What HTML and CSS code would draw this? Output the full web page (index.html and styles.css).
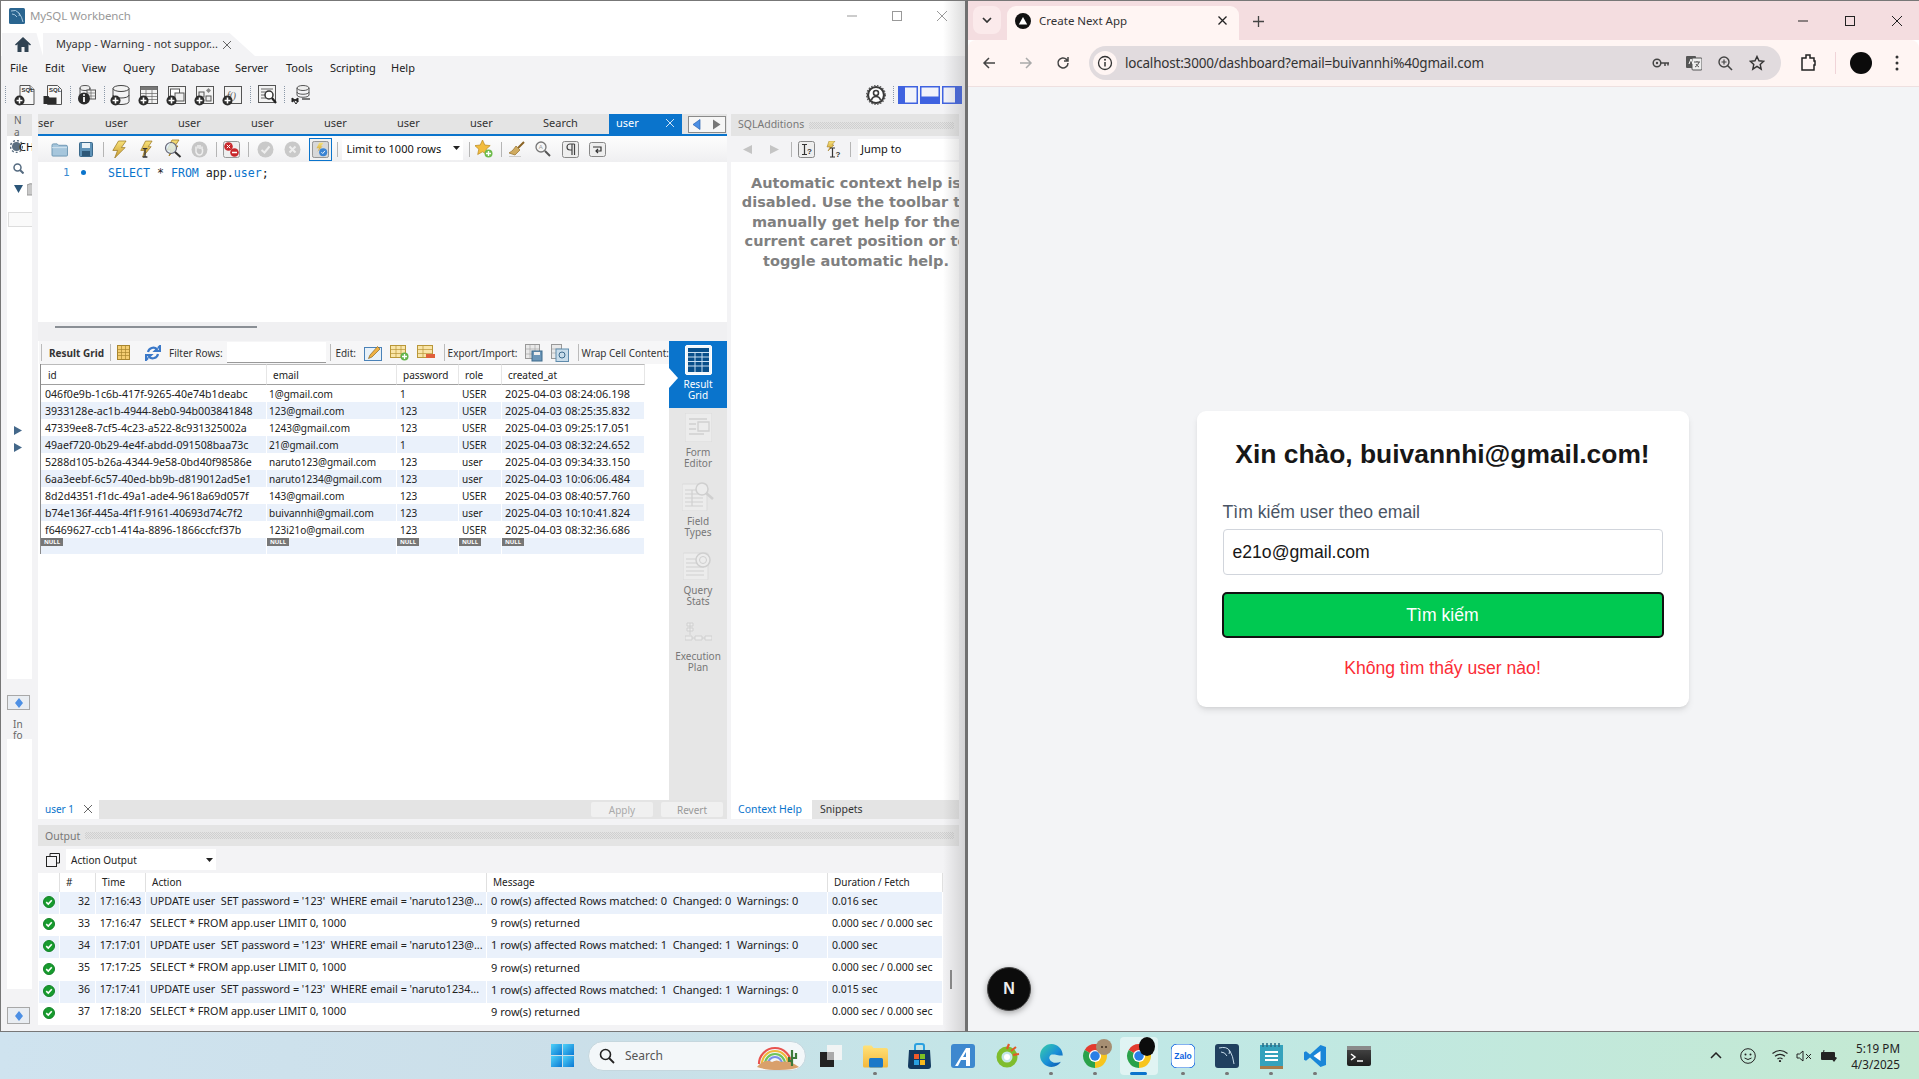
FILE: index.html
```html
<!DOCTYPE html>
<html lang="en">
<head>
<meta charset="utf-8">
<title>Desktop</title>
<link rel="stylesheet" href="styles.css">
</head>
<body>
<svg class="defs" width="0" height="0" aria-hidden="true">
  <defs>
    <linearGradient id="gBolt" x1="0" y1="0" x2="0" y2="1"><stop offset="0" stop-color="#f8e27a"/><stop offset="1" stop-color="#c99a2e"/></linearGradient>
    <linearGradient id="gEdge" x1="0" y1="0" x2="1" y2="1"><stop offset="0" stop-color="#38d0a8"/><stop offset=".55" stop-color="#1a8fd8"/><stop offset="1" stop-color="#0a4ea8"/></linearGradient>
    <linearGradient id="gWin" x1="0" y1="0" x2="1" y2="1"><stop offset="0" stop-color="#4fd2f8"/><stop offset="1" stop-color="#0a78d4"/></linearGradient>
    <linearGradient id="gFolder" x1="0" y1="0" x2="0" y2="1"><stop offset="0" stop-color="#ffe27a"/><stop offset="1" stop-color="#f4b83a"/></linearGradient>
    <linearGradient id="gTerm" x1="0" y1="0" x2="0" y2="1"><stop offset="0" stop-color="#4a4a4a"/><stop offset="1" stop-color="#1c1c1c"/></linearGradient>

    <symbol id="plusb" viewBox="0 0 12 12"><circle cx="6" cy="6" r="5.5" fill="#2b2b2b"/><path d="M6 2.8v6.4M2.8 6h6.4" stroke="#fff" stroke-width="1.7"/></symbol>
    <symbol id="page" viewBox="0 0 20 20"><path d="M5 .5h10l4 4v15H5z" fill="#f7f7f7" stroke="#555"/><path d="M15 .5v4h4" fill="#ddd" stroke="#555"/><text x="6.5" y="7.4" font-size="6" font-weight="700" font-family="Liberation Sans" fill="#333">SQL</text></symbol>
    <symbol id="folder" viewBox="0 0 18 16"><path d="M1 3.5q0-1.500 1.500-1.500h4l1.500 1.500h8q1.500 0 1.500 1.500v9q0 1-1 1h-14.500q-1 0-1-1z" fill="#a6c6dc" stroke="#6c95b2"/><path d="M1 6h16" stroke="#d4e4ef"/></symbol>
    <symbol id="save" viewBox="0 0 14 15"><rect x=".5" y=".5" width="13" height="14" rx="1" fill="#5f93b8" stroke="#3c6a8c"/><rect x="3" y="1" width="8" height="5" fill="#eaf2f7"/><rect x="3" y="9" width="8" height="5" fill="#2e5878"/></symbol>
    <symbol id="bolt" viewBox="0 0 18 20"><path d="M9 1h8l-5 7h4L5 19l3-8H3z" fill="url(#gBolt)" stroke="#9c7a25" stroke-width=".8"/></symbol>
    <symbol id="boltI" viewBox="0 0 16 20"><path d="M8 1h7l-4 6h3L5 18l2-7H3z" fill="url(#gBolt)" stroke="#9c7a25" stroke-width=".8"/><path d="M5 9h5M7.500 9v9M5 18h5" stroke="#333" stroke-width="1.400" fill="none"/></symbol>
    <symbol id="boltFind" viewBox="0 0 19 20"><path d="M9 1h7l-4 6h3L6 17l2-6H4z" fill="url(#gBolt)" stroke="#9c7a25" stroke-width=".8"/><circle cx="8" cy="9" r="5.500" fill="#dff0f8" fill-opacity=".8" stroke="#667" stroke-width="1.200"/><path d="M12 13l5.500 5" stroke="#333" stroke-width="2"/></symbol>
    <symbol id="hand" viewBox="0 0 17 17"><circle cx="8.500" cy="8.500" r="8" fill="#c6c6c6"/><path d="M5 8V5.500m2 2V4m2 4V4m2 4.500V5.500M5 8v3q1 3 3.500 3t3-3V8" stroke="#eee" stroke-width="1.500" fill="none"/></symbol>
    <symbol id="stopRed" viewBox="0 0 17 17"><rect x=".5" y=".5" width="16" height="16" rx="2" fill="#efefef" stroke="#999"/><circle cx="5.500" cy="5.500" r="4.300" fill="#c9272b"/><path d="M3.800 3.800l3.400 3.400m0-3.400l-3.400 3.400" stroke="#fff"/><circle cx="11.500" cy="11.500" r="4.300" fill="#c9272b"/><path d="M9 11.500h5" stroke="#fff" stroke-width="1.500"/></symbol>
    <symbol id="okC" viewBox="0 0 17 17"><circle cx="8.500" cy="8.500" r="8" fill="#c9c9c9"/><path d="M4.500 9l3 2.500 5-6" stroke="#eee" stroke-width="2" fill="none"/></symbol>
    <symbol id="noC" viewBox="0 0 17 17"><circle cx="8.500" cy="8.500" r="8" fill="#c9c9c9"/><path d="M5.500 5.500l6 6m0-6l-6 6" stroke="#eee" stroke-width="2" fill="none"/></symbol>
    <symbol id="toggle" viewBox="0 0 19 19"><rect x=".5" y=".5" width="18" height="18" rx="2" fill="#d8d8d8" stroke="#888"/><path d="M8 2h5l-3 4h2l-6 6 2-4H5z" fill="url(#gBolt)"/><circle cx="12.500" cy="12.500" r="4.500" fill="#3a84d4"/><path d="M10.500 12.500l1.500 1.500 2.500-3" stroke="#fff" fill="none"/></symbol>
    <symbol id="star" viewBox="0 0 18 18"><path d="M7.500 0l2.300 5 5.400.6-4 3.600 1.100 5.300-4.800-2.700-4.800 2.700 1.100-5.300-4-3.600 5.400-.6z" fill="#f2bc3e" stroke="#b98820" stroke-width=".7"/><circle cx="13.500" cy="13.500" r="4" fill="#6dbb4b"/><path d="M13.500 11v5M11 13.500h5" stroke="#fff" stroke-width="1.400"/></symbol>
    <symbol id="broom" viewBox="0 0 17 17"><path d="M16 1l-6 6" stroke="#8a6324" stroke-width="2"/><path d="M8 5l4 4-5 5-6-2q3-2 4-3z" fill="#d0ab60" stroke="#93702c" stroke-width=".7"/><path d="M1 15.500h12" stroke="#ccc"/></symbol>
    <symbol id="find" viewBox="0 0 16 16"><circle cx="6" cy="6" r="5" fill="#f6f6f6" stroke="#777" stroke-width="1.300"/><text x="3.800" y="8" font-size="6" fill="#999" font-family="Liberation Sans">A</text><path d="M10 10l5 5" stroke="#555" stroke-width="2"/></symbol>
    <symbol id="para" viewBox="0 0 17 17"><rect x=".5" y=".5" width="16" height="16" rx="2" fill="#eee" stroke="#888"/><path d="M10 3v11M12.500 3v11M12.500 3H8a3 3 0 0 0 0 6h2" stroke="#444" stroke-width="1.200" fill="none"/></symbol>
    <symbol id="wrap" viewBox="0 0 17 15"><rect x=".5" y=".5" width="16" height="14" rx="2" fill="#eee" stroke="#888"/><path d="M4 5h8v4H7m2-2l-2 2 2 2" stroke="#333" stroke-width="1.200" fill="none"/></symbol>
    <symbol id="arrL" viewBox="0 0 9 9"><path d="M9 0v9L0 4.500z" fill="#c4c4c4"/></symbol>
    <symbol id="arrR" viewBox="0 0 9 9"><path d="M0 0v9l9-4.500z" fill="#c4c4c4"/></symbol>
    <symbol id="navBoth" viewBox="0 0 38 17"><rect x=".5" y=".5" width="37" height="16" fill="#f6f6f6" stroke="#8a8a8a"/><path d="M12 3.500v10L5 8.500z" fill="#4c8fe4" stroke="#2a62b0" stroke-width=".7"/><path d="M25 3.500v10l7.500-5z" fill="#777"/></symbol>
    <symbol id="sideBtn" viewBox="0 0 8 10"><path d="M4 0v10L0 5zM4 0v10l4-5z" fill="#4c8fe4"/></symbol>
    <symbol id="helpI" viewBox="0 0 17 17"><rect x=".5" y=".5" width="16" height="16" rx="2" fill="#eee" stroke="#888"/><path d="M4 3.500h5M6.500 3.500v10M4 13.500h5" stroke="#333" stroke-width="1.200" fill="none"/><text x="9" y="13" font-size="8" font-weight="700" font-family="Liberation Sans" fill="#333">?</text></symbol>
    <symbol id="helpB" viewBox="0 0 17 17"><path d="M4 0h6L7 4h2L3 10l2-4H2z" fill="url(#gBolt)" stroke="#9c7a25" stroke-width=".5"/><path d="M5 7h5M7.500 7v9M5 16h5" stroke="#333" stroke-width="1.200" fill="none"/><text x="10.500" y="16" font-size="8" font-weight="700" font-family="Liberation Sans" fill="#333">?</text></symbol>

    <symbol id="db" viewBox="0 0 18 20"><ellipse cx="9" cy="3.500" rx="8" ry="3" fill="#f2f2f2" stroke="#444"/><path d="M1 3.500v13c0 4 16 4 16 0v-13M1 10c0 4 16 4 16 0" fill="none" stroke="#444"/></symbol>
    <symbol id="grid" viewBox="0 0 18 18"><rect x=".5" y=".5" width="17" height="17" fill="#f3f3f3" stroke="#555"/><rect x=".5" y=".5" width="17" height="3.500" fill="#777"/><path d="M1 7.500h16M1 10.500h16M1 13.500h16M6 4v14M12 4v14" stroke="#666" stroke-width=".7"/></symbol>
    <symbol id="winV" viewBox="0 0 18 18"><rect x=".5" y=".5" width="17" height="17" fill="#f3f3f3" stroke="#555"/><rect x="2.500" y="3" width="9" height="8" fill="#fff" stroke="#555"/><rect x="7" y="7" width="9" height="8" fill="#eee" stroke="#555"/></symbol>
    <symbol id="procB" viewBox="0 0 18 18"><rect x=".5" y=".5" width="17" height="17" fill="#f3f3f3" stroke="#555"/><rect x="3" y="6" width="5" height="5" fill="#eee" stroke="#555"/><rect x="10" y="10" width="5" height="5" fill="#eee" stroke="#555"/><path d="M12.500 2l2.500 2.500-2.500 2.500-2.500-2.500z" fill="#888"/></symbol>
    <symbol id="funcB" viewBox="0 0 18 18"><rect x=".5" y=".5" width="17" height="17" fill="#f3f3f3" stroke="#555"/><text x="3" y="13" font-size="9.500" fill="#555" font-family="Liberation Serif" font-style="italic">f()</text></symbol>
    <symbol id="searchT" viewBox="0 0 19 20"><rect x=".5" y=".5" width="17" height="17" fill="#f3f3f3" stroke="#555"/><path d="M3 4h12M3 7h6M3 10h5M3 13h5" stroke="#666"/><circle cx="11" cy="10" r="4" fill="#fff" stroke="#333" stroke-width="1.500"/><path d="M14 13l4 5" stroke="#222" stroke-width="2.200"/></symbol>
    <symbol id="infoDb" viewBox="0 0 18 20"><ellipse cx="7" cy="3" rx="5" ry="2.500" fill="#eee" stroke="#555"/><path d="M2 3v6M12 3v4" stroke="#555"/><rect x="9" y="5" width="8.500" height="9" fill="#f3f3f3" stroke="#555"/><path d="M9 8h9M9 11h9M13 5v9" stroke="#666" stroke-width=".7"/><circle cx="6" cy="13.500" r="6" fill="#2a2a2a"/><path d="M6 12v5" stroke="#fff" stroke-width="1.800"/><circle cx="6" cy="10" r="1" fill="#fff"/></symbol>
    <symbol id="openSql" viewBox="0 0 19 20"><path d="M4 .5h10l4 4v15H4z" fill="#f7f7f7" stroke="#555"/><text x="5.500" y="7.400" font-size="6" font-weight="700" font-family="Liberation Sans" fill="#333">SQL</text><path d="M0 11h5l1 1.500h7V19H0z" fill="#2b2b2b"/></symbol>
    <symbol id="recon" viewBox="0 0 20 20"><ellipse cx="12" cy="3" rx="6" ry="2.500" fill="#eee" stroke="#555"/><path d="M6 3v7c0 3 12 3 12 0V3M6 7c0 3 12 3 12 0" fill="none" stroke="#555"/><path d="M11 14h8" stroke="#333" stroke-width="1.300"/><path d="M1 13l3 2-3 2zM7 13l-3 2 3 2zM3 16l2 3M7 16l-2 3" fill="#222" stroke="#222"/></symbol>
    <symbol id="gearP" viewBox="0 0 20 20"><circle cx="10" cy="10" r="8" fill="#fff" stroke="#3b3b3b" stroke-width="2.200"/><circle cx="10" cy="10" r="9.400" fill="none" stroke="#555" stroke-width="1.200" stroke-dasharray="1.500 1.500"/><circle cx="10" cy="8" r="2.500" fill="none" stroke="#3b3b3b" stroke-width="1.600"/><path d="M5.500 15q1-3.500 4.500-3.500t4.500 3.500" fill="none" stroke="#3b3b3b" stroke-width="1.600"/></symbol>
    <symbol id="panelL" viewBox="0 0 20 18"><rect width="20" height="18" fill="#3f62e0"/><rect x="7" y="1.500" width="11.500" height="15" fill="#f2f3fa"/></symbol>
    <symbol id="panelB" viewBox="0 0 20 18"><rect width="20" height="18" fill="#3f62e0"/><rect x="1.500" y="1.500" width="17" height="9" fill="#f2f3fa"/></symbol>
    <symbol id="panelR" viewBox="0 0 20 18"><rect width="20" height="18" fill="#3f62e0"/><rect x="1.500" y="1.500" width="11.500" height="15" fill="#f2f3fa"/></symbol>

    <symbol id="stripGrid" viewBox="0 0 27 37"><rect x=".5" y=".5" width="26" height="29" rx="1.500" fill="#f2f7fb" stroke="#fff"/><rect x="3" y="3" width="21" height="24" fill="#084f8a"/><path d="M3 7.500h21M3 12h21M3 16.500h21M3 21h21M10 7.500V27M17 7.500V27" stroke="#c6dff2"/></symbol>
    <symbol id="stripForm" viewBox="0 0 27 29"><rect width="27" height="29" rx="1" fill="#ececec" stroke="#dadada"/><path d="M4 6h18M4 11h7M4 16h7M4 21h15M13 9h11v9H13z" stroke="#d0d0d0" fill="none" stroke-width="1.300"/></symbol>
    <symbol id="stripField" viewBox="0 0 32 29"><rect y="2" width="25" height="27" rx="1" fill="#ececec" stroke="#dadada"/><path d="M3 8h18M3 12h18M3 16h18M3 20h18M3 24h18M10 8v16" stroke="#d0d0d0" stroke-width="1.200"/><circle cx="20" cy="7" r="6" fill="#ececec" stroke="#cfcfcf" stroke-width="1.500"/><path d="M24 11l7 6" stroke="#cfcfcf" stroke-width="2.500"/></symbol>
    <symbol id="stripStats" viewBox="0 0 30 29"><rect y="2" width="25" height="27" rx="1" fill="#ececec" stroke="#dadada"/><path d="M3 8h14M3 12h14M3 16h18M3 20h18M3 24h18" stroke="#d0d0d0" stroke-width="1.200"/><circle cx="20" cy="9" r="7" fill="#ececec" stroke="#cfcfcf" stroke-width="1.500"/><circle cx="20" cy="9" r="3.500" fill="none" stroke="#cfcfcf"/></symbol>
    <symbol id="stripPlan" viewBox="0 0 27 22"><path d="M5 2v12M2 2h6v3H2zM2 7h6v3H2zM0 15h7v4H0zM10 15h7v4h-7zM20 15h7v4h-7zM7 17h3M17 17h3" fill="#ececec" stroke="#d0d0d0"/></symbol>

    <symbol id="rgIcon" viewBox="0 0 13 15"><rect x=".5" y=".5" width="12" height="14" fill="#f4ce72" stroke="#a9862e"/><path d="M4.500 1v13M8.500 1v13M1 4.500h11M1 7.500h11M1 10.500h11" stroke="#a9862e" stroke-width=".7"/></symbol>
    <symbol id="refresh" viewBox="0 0 16 16"><path d="M3 7a5.500 5.500 0 0 1 9-3l-2 2h5V1l-2 2" fill="none" stroke="#3a78c8" stroke-width="2.200"/><path d="M13 9a5.500 5.500 0 0 1-9 3l2-2H1v5l2-2" fill="none" stroke="#3a78c8" stroke-width="2.200"/></symbol>
    <symbol id="editI" viewBox="0 0 18 17"><rect x=".5" y="3.500" width="17" height="13" fill="#e8f1f8" stroke="#4a82b8"/><path d="M6 11l-1.500 3.500L8 13l8-8-2.500-2.500z" fill="#f0b040" stroke="#8a6a25" stroke-width=".7"/></symbol>
    <symbol id="addR" viewBox="0 0 19 16"><rect x=".5" y=".5" width="15" height="12" fill="#f9e5a8" stroke="#b99738"/><path d="M1 4.500h14M1 8.500h14M6 1v11M11 1v11" stroke="#b99738" stroke-width=".7"/><circle cx="14.500" cy="11.500" r="4" fill="#63b34a"/><path d="M14.500 9v5M12 11.500h5" stroke="#fff" stroke-width="1.300"/></symbol>
    <symbol id="delR" viewBox="0 0 19 16"><rect x=".5" y=".5" width="15" height="12" fill="#f9e5a8" stroke="#b99738"/><path d="M1 4.500h14M1 8.500h14M6 1v11" stroke="#b99738" stroke-width=".7"/><rect x="9" y="9" width="9" height="4" fill="#e0603a"/></symbol>
    <symbol id="expI" viewBox="0 0 18 18"><rect x=".5" y=".5" width="14" height="14" fill="#e9e9e9" stroke="#999"/><path d="M5 1v13M10 1v13M1 5h13M1 10h13" stroke="#aaa" stroke-width=".7"/><rect x="7" y="7" width="10" height="10" fill="#6c96b8" stroke="#3c6a8c"/><rect x="9" y="8" width="6" height="3" fill="#eee"/></symbol>
    <symbol id="impI" viewBox="0 0 18 18"><rect x=".5" y=".5" width="10" height="14" fill="#e9e9e9" stroke="#999"/><path d="M1 5h9M1 9h9" stroke="#aaa" stroke-width=".7"/><rect x="5" y="5" width="12.500" height="12.500" fill="#c8dcea" stroke="#5f8bac"/><circle cx="11" cy="11" r="3" fill="none" stroke="#3c6a8c"/></symbol>

    <symbol id="okG" viewBox="0 0 13 13"><circle cx="6.500" cy="6.500" r="6" fill="#179b2e" stroke="#0f7f24"/><path d="M3.500 6.700l2.200 2.100 3.800-4.300" stroke="#fff" stroke-width="1.700" fill="none"/></symbol>
    <symbol id="copyB" viewBox="0 0 14 14"><path d="M4 3V.5h9.500V10H11" fill="none" stroke="#222"/><rect x=".5" y="3.500" width="10" height="10" fill="none" stroke="#222"/></symbol>
    <symbol id="house" viewBox="0 0 16 15"><path d="M8 0L0 7.500l1 1 1.500-1.300V15h4V10h3v5h4V7.200L15 8.500l1-1z" fill="#2f4252"/></symbol>
    <symbol id="dolphin" viewBox="0 0 16 16"><rect width="16" height="16" rx="1.500" fill="#2a6590"/><path d="M2 3q5-2 8 2 3 4 4 9M3 6q3 0 5 3M10 5q1 1 0 3" fill="none" stroke="#b7d4e8" stroke-width=".9"/></symbol>

    <symbol id="chromeL" viewBox="0 0 24 24"><path d="M12 12L2.470 6.500A11 11 0 0 1 21.530 6.500z" fill="#e33b2e"/><path d="M12 12L21.530 6.500A11 11 0 0 1 12 23z" fill="#f7c51e"/><path d="M12 12L12 23A11 11 0 0 1 2.470 6.500z" fill="#2aa24a"/><circle cx="12" cy="12" r="5.600" fill="#fff"/><circle cx="12" cy="12" r="4.400" fill="#2a7fe6"/></symbol>
  </defs>
</svg>

<div class="desktop">
  <div class="windows">

    <section class="wb">
      <header class="wb-title">
        <svg width="16" height="16"><use href="#dolphin"/></svg>
        <span class="wb-name">MySQL Workbench</span>
        <div class="wb-ctl">
          <svg width="10" height="10" viewBox="0 0 10 10"><path d="M0 5h10" stroke="#999"/></svg>
          <svg width="10" height="10" viewBox="0 0 10 10"><rect x=".5" y=".5" width="9" height="9" fill="none" stroke="#999"/></svg>
          <svg width="10" height="10" viewBox="0 0 10 10"><path d="M0 0l10 10M10 0L0 10" stroke="#999"/></svg>
        </div>
      </header>
      <div class="wb-tabs">
        <div class="home-tab"><svg width="16" height="15"><use href="#house"/></svg></div>
        <div class="conn-tab"><span>Myapp - Warning - not suppor...</span><svg width="8" height="8" viewBox="0 0 8 8"><path d="M0 0l8 8M8 0L0 8" stroke="#666"/></svg></div>
      </div>
      <nav class="wb-menu">
        <span class="m-file">File</span><span class="m-edit">Edit</span><span class="m-view">View</span><span class="m-query">Query</span><span class="m-db">Database</span><span class="m-server">Server</span><span class="m-tools">Tools</span><span class="m-script">Scripting</span><span class="m-help">Help</span>
      </nav>
      <div class="wb-tools">
        <i class="dots"></i>
        <span class="tool first"><svg width="20" height="20"><use href="#page"/></svg><svg class="badge" width="11" height="11"><use href="#plusb"/></svg></span>
        <span class="tool"><svg width="20" height="20"><use href="#openSql"/></svg></span>
        <i class="dots"></i>
        <span class="tool"><svg width="18" height="20"><use href="#infoDb"/></svg></span>
        <i class="dots"></i>
        <span class="tool"><svg width="18" height="20"><use href="#db"/></svg><svg class="badge" width="11" height="11"><use href="#plusb"/></svg></span>
        <span class="tool"><svg width="18" height="18"><use href="#grid"/></svg><svg class="badge" width="11" height="11"><use href="#plusb"/></svg></span>
        <span class="tool"><svg width="18" height="18"><use href="#winV"/></svg><svg class="badge" width="11" height="11"><use href="#plusb"/></svg></span>
        <span class="tool"><svg width="18" height="18"><use href="#procB"/></svg><svg class="badge" width="11" height="11"><use href="#plusb"/></svg></span>
        <span class="tool"><svg width="18" height="18"><use href="#funcB"/></svg><svg class="badge" width="11" height="11"><use href="#plusb"/></svg></span>
        <i class="dots"></i>
        <span class="tool"><svg width="19" height="20"><use href="#searchT"/></svg></span>
        <i class="dots"></i>
        <span class="tool"><svg width="20" height="20"><use href="#recon"/></svg></span>
        <div class="wb-tools-right">
          <svg width="20" height="20"><use href="#gearP"/></svg>
          <i class="dots slim"></i>
          <svg width="20" height="18"><use href="#panelL"/></svg>
          <svg width="20" height="18"><use href="#panelB"/></svg>
          <svg width="20" height="18"><use href="#panelR"/></svg>
        </div>
      </div>

      <div class="wb-work">
        <aside class="nav-side">
          <div class="nav-head"><span>N<br>a</span></div>
          <div class="nav-body">
            <div class="nav-row"><svg width="13" height="13" viewBox="0 0 13 13"><circle cx="6.500" cy="6.500" r="4.500" fill="#5a6e80"/><circle cx="6.500" cy="6.500" r="6" fill="none" stroke="#5a6e80" stroke-width="1.500" stroke-dasharray="2 2"/></svg><b>CH</b></div>
            <div class="nav-find"><svg width="11" height="11" viewBox="0 0 11 11"><circle cx="4.500" cy="4.500" r="3.500" fill="none" stroke="#556b80" stroke-width="1.500"/><path d="M7 7l3.500 3.500" stroke="#556b80" stroke-width="2"/></svg></div>
            <div class="nav-tree"><svg width="9" height="8" viewBox="0 0 9 8"><path d="M0 0h9L4.500 8z" fill="#2b5578"/></svg><svg width="6" height="13" viewBox="0 0 6 13"><path d="M0 2q3-2 6-1v11H0z" fill="#c8c8c8" stroke="#999"/></svg></div>
            <div class="nav-filter"></div>
            <div class="nav-arrows">
              <svg width="8" height="9" viewBox="0 0 8 9"><path d="M0 0l8 4.500L0 9z" fill="#44688a"/></svg>
              <svg width="8" height="9" viewBox="0 0 8 9"><path d="M0 0l8 4.500L0 9z" fill="#44688a"/></svg>
            </div>
          </div>
          <div class="side-btn"><svg width="8" height="10"><use href="#sideBtn"/></svg></div>
          <div class="nav-info">In<br>fo</div>
          <div class="nav-body info"></div>
          <div class="side-btn low"><svg width="8" height="10"><use href="#sideBtn"/></svg></div>
        </aside>

        <div class="wb-center">
          <div class="wb-upper">
            <div class="q-col">
              <div class="q-tabs">
                <span class="qt cut">ser</span><span class="qt">user</span><span class="qt">user</span><span class="qt">user</span><span class="qt">user</span><span class="qt">user</span><span class="qt">user</span><span class="qt srch">Search</span>
                <span class="qt active">user<svg width="8" height="8" viewBox="0 0 8 8"><path d="M0 0l8 8M8 0L0 8" stroke="#cfe3f6"/></svg></span>
                <svg class="q-nav" width="38" height="17"><use href="#navBoth"/></svg>
              </div>
              <div class="q-bar">
                <span class="ti"><svg width="17" height="15"><use href="#folder"/></svg></span>
                <span class="ti"><svg width="14" height="15"><use href="#save"/></svg></span>
                <i class="sep"></i>
                <span class="ti"><svg width="17" height="19"><use href="#bolt"/></svg></span>
                <span class="ti"><svg width="15" height="19"><use href="#boltI"/></svg></span>
                <span class="ti"><svg width="19" height="20"><use href="#boltFind"/></svg></span>
                <span class="ti"><svg width="17" height="17"><use href="#hand"/></svg></span>
                <i class="sep"></i>
                <span class="ti"><svg width="17" height="17"><use href="#stopRed"/></svg></span>
                <i class="sep wide"></i>
                <span class="ti"><svg width="17" height="17"><use href="#okC"/></svg></span>
                <span class="ti"><svg width="17" height="17"><use href="#noC"/></svg></span>
                <span class="ti-on"><svg width="17" height="17"><use href="#toggle"/></svg></span>
                <i class="sep after-on"></i>
                <span class="limit">Limit to 1000 rows<svg width="7" height="4" viewBox="0 0 7 4"><path d="M0 0h7L3.500 4z" fill="#222"/></svg></span>
                <i class="sep after-limit"></i>
                <span class="ti"><svg width="18" height="18"><use href="#star"/></svg></span>
                <i class="sep"></i>
                <span class="ti"><svg width="17" height="17"><use href="#broom"/></svg></span>
                <span class="ti"><svg width="16" height="16"><use href="#find"/></svg></span>
                <span class="ti"><svg width="17" height="17"><use href="#para"/></svg></span>
                <span class="ti"><svg width="17" height="15"><use href="#wrap"/></svg></span>
              </div>
              <div class="editor">
                <span class="ln">1</span><i class="dot"></i>
                <code class="sql"><span class="kw">SELECT</span> * <span class="kw">FROM</span> app.<span class="kw">user</span>;</code>
              </div>
              <div class="split"><i></i></div>
              <div class="results">
                <div class="res-main">
                  <div class="res-bar">
                    <i class="rsep first"></i><b class="rg">Result Grid</b><i class="rsep second"></i>
                    <svg class="ri1" width="13" height="15"><use href="#rgIcon"/></svg>
                    <svg class="ri2" width="16" height="16"><use href="#refresh"/></svg>
                    <span class="fr">Filter Rows:</span><span class="fbox"></span><i class="rsep edit"></i>
                    <span class="lb ed">Edit:</span>
                    <svg class="ri3" width="18" height="17"><use href="#editI"/></svg>
                    <svg class="ri3" width="19" height="16"><use href="#addR"/></svg>
                    <svg class="ri3" width="19" height="16"><use href="#delR"/></svg>
                    <i class="rsep exp"></i>
                    <span class="lb ex">Export/Import:</span>
                    <svg class="ri3" width="18" height="18"><use href="#expI"/></svg>
                    <svg class="ri3" width="18" height="18"><use href="#impI"/></svg>
                    <i class="rsep wr"></i>
                    <span class="lb">Wrap Cell Content:</span>
                  </div>
                  <table class="grid">
                    <thead><tr><th>id</th><th>email</th><th>password</th><th>role</th><th>created_at</th></tr></thead>
                    <tbody>
                      <tr><td>046f0e9b-1c6b-417f-9265-40e74b1deabc</td><td>1@gmail.com</td><td>1</td><td>USER</td><td>2025-04-03 08:24:06.198</td></tr>
                      <tr><td>3933128e-ac1b-4944-8eb0-94b003841848</td><td>123@gmail.com</td><td>123</td><td>USER</td><td>2025-04-03 08:25:35.832</td></tr>
                      <tr><td>47339ee8-7cf5-4c23-a522-8c931325002a</td><td>1243@gmail.com</td><td>123</td><td>USER</td><td>2025-04-03 09:25:17.051</td></tr>
                      <tr><td>49aef720-0b29-4e4f-abdd-091508baa73c</td><td>21@gmail.com</td><td>1</td><td>USER</td><td>2025-04-03 08:32:24.652</td></tr>
                      <tr><td>5288d105-b26a-4344-9e58-0bd40f98586e</td><td>naruto123@gmail.com</td><td>123</td><td>user</td><td>2025-04-03 09:34:33.150</td></tr>
                      <tr><td>6aa3eebf-6c57-40ed-bb9b-d819012ad5e1</td><td>naruto1234@gmail.com</td><td>123</td><td>user</td><td>2025-04-03 10:06:06.484</td></tr>
                      <tr><td>8d2d4351-f1dc-49a1-ade4-9618a69d057f</td><td>143@gmail.com</td><td>123</td><td>USER</td><td>2025-04-03 08:40:57.760</td></tr>
                      <tr><td>b74e136f-445a-4f1f-9161-40693d74c7f2</td><td>buivannhi@gmail.com</td><td>123</td><td>user</td><td>2025-04-03 10:10:41.824</td></tr>
                      <tr><td>f6469627-ccb1-414a-8896-1866ccfcf37b</td><td>123i21o@gmail.com</td><td>123</td><td>USER</td><td>2025-04-03 08:32:36.686</td></tr>
                      <tr class="null"><td><mark>NULL</mark></td><td><mark>NULL</mark></td><td><mark>NULL</mark></td><td><mark>NULL</mark></td><td><mark>NULL</mark></td></tr>
                    </tbody>
                  </table>
                </div>
                <div class="strip">
                  <div class="st on"><svg width="27" height="37"><use href="#stripGrid"/></svg><span>Result<br>Grid</span></div>
                  <div class="st"><svg width="27" height="29"><use href="#stripForm"/></svg><span>Form<br>Editor</span></div>
                  <div class="st"><svg width="32" height="29"><use href="#stripField"/></svg><span>Field<br>Types</span></div>
                  <div class="st"><svg width="30" height="29"><use href="#stripStats"/></svg><span>Query<br>Stats</span></div>
                  <div class="st plan"><svg width="27" height="22"><use href="#stripPlan"/></svg><span>Execution<br>Plan</span></div>
                </div>
              </div>
              <div class="res-tabs">
                <span class="rt">user 1<svg width="8" height="8" viewBox="0 0 8 8"><path d="M0 0l8 8M8 0L0 8" stroke="#666"/></svg></span>
                <span class="rbtn apply">Apply</span><span class="rbtn">Revert</span>
              </div>
            </div>

            <div class="add-col">
              <div class="add-head"><span>SQLAdditions</span><i class="hatch"></i></div>
              <div class="add-bar">
                <span class="ti"><svg width="9" height="9"><use href="#arrL"/></svg></span>
                <span class="ti"><svg width="9" height="9"><use href="#arrR"/></svg></span>
                <i class="sep"></i>
                <span class="ti"><svg width="17" height="17"><use href="#helpI"/></svg></span>
                <span class="ti"><svg width="17" height="17"><use href="#helpB"/></svg></span>
                <i class="sep"></i>
                <span class="jump">Jump to</span>
              </div>
              <div class="add-body">
                <p>Automatic context help is<br>disabled. Use the toolbar to<br>manually get help for the<br>current caret position or to<br>toggle automatic help.</p>
              </div>
              <div class="add-tabs"><span class="at on">Context Help</span><span class="at">Snippets</span></div>
            </div>
          </div>

          <div class="out">
            <div class="out-head"><span>Output</span><i class="hatch"></i></div>
            <div class="out-bar">
              <svg width="14" height="14"><use href="#copyB"/></svg>
              <span class="combo">Action Output<svg width="7" height="4" viewBox="0 0 7 4"><path d="M0 0h7L3.500 4z" fill="#222"/></svg></span>
            </div>
            <div class="out-wrap">
              <table class="log">
                <thead><tr><th></th><th class="num">#</th><th>Time</th><th>Action</th><th>Message</th><th>Duration / Fetch</th></tr></thead>
                <tbody>
                  <tr><td><svg><use href="#okG"/></svg></td><td class="r">32</td><td class="c">17:16:43</td><td>UPDATE user  SET password = '123'  WHERE email = 'naruto123@...</td><td>0 row(s) affected Rows matched: 0  Changed: 0  Warnings: 0</td><td>0.016 sec</td></tr>
                  <tr><td><svg><use href="#okG"/></svg></td><td class="r">33</td><td class="c">17:16:47</td><td>SELECT * FROM app.user LIMIT 0, 1000</td><td>9 row(s) returned</td><td>0.000 sec / 0.000 sec</td></tr>
                  <tr><td><svg><use href="#okG"/></svg></td><td class="r">34</td><td class="c">17:17:01</td><td>UPDATE user  SET password = '123'  WHERE email = 'naruto123@...</td><td>1 row(s) affected Rows matched: 1  Changed: 1  Warnings: 0</td><td>0.000 sec</td></tr>
                  <tr><td><svg><use href="#okG"/></svg></td><td class="r">35</td><td class="c">17:17:25</td><td>SELECT * FROM app.user LIMIT 0, 1000</td><td>9 row(s) returned</td><td>0.000 sec / 0.000 sec</td></tr>
                  <tr><td><svg><use href="#okG"/></svg></td><td class="r">36</td><td class="c">17:17:41</td><td>UPDATE user  SET password = '123'  WHERE email = 'naruto1234...</td><td>1 row(s) affected Rows matched: 1  Changed: 1  Warnings: 0</td><td>0.015 sec</td></tr>
                  <tr><td><svg><use href="#okG"/></svg></td><td class="r">37</td><td class="c">17:18:20</td><td>SELECT * FROM app.user LIMIT 0, 1000</td><td>9 row(s) returned</td><td>0.000 sec / 0.000 sec</td></tr>
                </tbody>
              </table>
              <div class="out-scroll"><i></i></div>
            </div>
          </div>
        </div>
      </div>
    </section>

    <section class="chrome">
      <header class="ch-top">
        <span class="ch-drop"><svg width="10" height="6" viewBox="0 0 10 6"><path d="M1 1l4 4 4-4" fill="none" stroke="#333" stroke-width="1.700"/></svg></span>
        <div class="ch-tab">
          <svg width="16" height="16" viewBox="0 0 16 16"><circle cx="8" cy="8" r="8" fill="#111"/><path d="M8 4l4.200 7.500H3.800z" fill="#fff"/></svg>
          <span>Create Next App</span>
          <svg class="ch-x" width="9" height="9" viewBox="0 0 9 9"><path d="M.5.5l8 8m0-8l-8 8" stroke="#222" stroke-width="1.300"/></svg>
        </div>
        <svg class="ch-plus" width="11" height="11" viewBox="0 0 11 11"><path d="M5.500 0v11M0 5.500h11" stroke="#444" stroke-width="1.300"/></svg>
        <div class="ch-ctl">
          <svg width="10" height="10" viewBox="0 0 10 10"><path d="M0 5h10" stroke="#222"/></svg>
          <svg width="10" height="10" viewBox="0 0 10 10"><rect x=".5" y=".5" width="9" height="9" fill="none" stroke="#222"/></svg>
          <svg width="10" height="10" viewBox="0 0 10 10"><path d="M0 0l10 10M10 0L0 10" stroke="#222"/></svg>
        </div>
      </header>
      <div class="ch-bar">
        <svg class="cb" width="14" height="14" viewBox="0 0 14 14"><path d="M13 7H2M7 2L2 7l5 5" fill="none" stroke="#444" stroke-width="1.500"/></svg>
        <svg class="cb" width="14" height="14" viewBox="0 0 14 14"><path d="M1 7h11M7 2l5 5-5 5" fill="none" stroke="#aaa" stroke-width="1.500"/></svg>
        <svg class="cb" width="14" height="14" viewBox="0 0 14 14"><path d="M12 7a5 5 0 1 1-1.500-3.600L12 5M12 1v4H8" fill="none" stroke="#444" stroke-width="1.500"/></svg>
        <div class="omni">
          <span class="omni-i"><svg width="16" height="16" viewBox="0 0 16 16"><circle cx="8" cy="8" r="6.500" fill="none" stroke="#333" stroke-width="1.300"/><path d="M8 7v4.500" stroke="#333" stroke-width="1.500"/><circle cx="8" cy="4.800" r="1" fill="#333"/></svg></span>
          <span class="url">localhost:3000/dashboard?email=buivannhi%40gmail.com</span>
          <svg class="oi" width="18" height="10" viewBox="0 0 18 10"><circle cx="5" cy="5" r="3.800" fill="none" stroke="#444" stroke-width="1.500"/><circle cx="5" cy="5" r="1.200" fill="#444"/><path d="M9 5h8M13 5v3M16 5v2.500" stroke="#444" stroke-width="1.500"/></svg>
          <svg class="oi" width="16" height="16" viewBox="0 0 16 16"><rect x="0" y="1" width="10" height="12" rx="1" fill="#555"/><rect x="6" y="3" width="10" height="12" rx="1" fill="#eee" stroke="#555"/><path d="M3 9l2-5 2 5" stroke="#fff" fill="none"/><path d="M8 7h6M11 6v1M13 7q-1 4-4 5M10 9q1 2 3 3" stroke="#555" fill="none"/></svg>
          <svg class="oi" width="15" height="15" viewBox="0 0 15 15"><circle cx="6" cy="6" r="5" fill="none" stroke="#444" stroke-width="1.400"/><path d="M9.500 9.500L14 14" stroke="#444" stroke-width="1.600"/><path d="M6 3.500v5M3.500 6h5" stroke="#444" stroke-width="1.200"/></svg>
          <svg class="oi" width="16" height="16" viewBox="0 0 16 16"><path d="M8 1.500l2 4.300 4.700.5-3.500 3.200 1 4.600L8 11.300l-4.200 2.800 1-4.600L1.300 6.300 6 5.800z" fill="none" stroke="#333" stroke-width="1.400"/></svg>
        </div>
        <svg class="ext" width="16" height="18" viewBox="0 0 16 18"><path d="M2 4h4V1h4v3h4v3h1v4h-1v5H2z" fill="none" stroke="#222" stroke-width="1.500"/></svg>
        <i class="ch-sep"></i>
        <span class="avatar"></span>
        <svg class="kebab" width="4" height="16" viewBox="0 0 4 16"><circle cx="2" cy="2" r="1.500" fill="#333"/><circle cx="2" cy="8" r="1.500" fill="#333"/><circle cx="2" cy="14" r="1.500" fill="#333"/></svg>
      </div>
      <main class="page">
        <div class="card">
          <h1>Xin chào, buivannhi@gmail.com!</h1>
          <label class="lbl">Tìm kiếm user theo email</label>
          <div class="field">e21o@gmail.com</div>
          <div class="go">Tìm kiếm</div>
          <p class="miss">Không tìm thấy user nào!</p>
        </div>
        <div class="next-badge">N</div>
      </main>
    </section>
  </div>

  <footer class="taskbar">
    <span class="tk"><svg width="23" height="23" viewBox="0 0 23 23"><rect width="11" height="11" fill="url(#gWin)"/><rect x="12" width="11" height="11" fill="url(#gWin)"/><rect y="12" width="11" height="11" fill="url(#gWin)"/><rect x="12" y="12" width="11" height="11" fill="url(#gWin)"/></svg></span>
    <div class="search">
      <svg width="16" height="16" viewBox="0 0 16 16"><circle cx="6.500" cy="6.500" r="5" fill="none" stroke="#222" stroke-width="1.600"/><path d="M10 10l5 5" stroke="#222" stroke-width="1.800"/></svg>
      <span>Search</span>
      <svg class="art" width="44" height="28" viewBox="0 0 44 28"><path d="M3 22a16 16 0 0 1 32 0" fill="none" stroke="#e8534f" stroke-width="2.200"/><path d="M6 22a13 13 0 0 1 26 0" fill="none" stroke="#f0b93a" stroke-width="2.200"/><path d="M9 22a10 10 0 0 1 20 0" fill="none" stroke="#6fc35a" stroke-width="2.200"/><path d="M12 22a7 7 0 0 1 14 0" fill="none" stroke="#7a8fe8" stroke-width="2.200"/><path d="M1 25q8-9 15-5 5-3 9 0 8-2 18 5-6 3-20 3T1 25z" fill="#d9a06b"/><path d="M36 24V8m0 8h4v-5M36 19h-3v-4" fill="none" stroke="#3c7a3a" stroke-width="2.200"/></svg>
    </div>
    <span class="tk tv"><svg width="24" height="24" viewBox="0 0 24 24"><rect x="8" y="1" width="15" height="15" fill="#f5f5f5" opacity=".9"/><rect x="1" y="8" width="14" height="15" fill="#222"/><rect x="8" y="8" width="7" height="8" fill="#aaa"/></svg></span>
    <span class="tk dotd"><svg width="25" height="24" viewBox="0 0 25 24"><path d="M0 3q0-1.500 1.500-1.500h7l2 2.500H23q2 0 2 2v16q0 1.500-1.500 1.500h-22Q0 23.500 0 22z" fill="url(#gFolder)"/><rect x="6" y="14" width="14" height="9.500" rx="1.500" fill="#1a78c8"/></svg></span>
    <span class="tk"><svg width="23" height="26" viewBox="0 0 23 26"><path d="M1 7h21l1 16q0 3-3 3H3q-3 0-3-3z" fill="#12395f"/><path d="M7 7V3q0-2 2-2h5q2 0 2 2v4" fill="none" stroke="#2aa0e0" stroke-width="2"/><rect x="6" y="11" width="5" height="5" fill="#ee5a2a"/><rect x="12" y="11" width="5" height="5" fill="#7cc024"/><rect x="6" y="17" width="5" height="5" fill="#2aa0e0"/><rect x="12" y="17" width="5" height="5" fill="#f6b81c"/></svg></span>
    <span class="tk"><svg width="24" height="24" viewBox="0 0 24 24"><rect width="24" height="24" rx="3" fill="#3d88cf"/><path d="M4 22L15 4h4v18h-4v-6H10l-3 6z" fill="#fff"/><path d="M12 13h3V8z" fill="#3d88cf"/></svg></span>
    <span class="tk"><svg width="25" height="25" viewBox="0 0 25 25"><circle cx="12" cy="14" r="8" fill="none" stroke="#7fbd2d" stroke-width="5"/><circle cx="12" cy="14" r="3" fill="#fff"/><path d="M12 6l2-5M16 8l5-4M18 12l6-1" stroke="#e2592a" stroke-width="2.200"/></svg></span>
    <span class="tk dotd"><svg width="25" height="25" viewBox="0 0 24 24"><path d="M12 1A11 11 0 0 0 1 12c0 6 5 11 11 11 4 0 7-2 9-5-4 2-10 1-11-3-.5-2 1-4 3-4 3 0 5 1 9.800 1 0-6-4.800-11-10.800-11z" fill="url(#gEdge)"/></svg></span>
    <span class="tk dotd"><svg width="26" height="26"><use href="#chromeL"/></svg><svg class="tk-over" width="16" height="16" viewBox="0 0 16 16"><circle cx="8" cy="8" r="8" fill="#a68e72"/><circle cx="6" cy="8" r="1" fill="#3a2a1e"/><circle cx="10" cy="8" r="1" fill="#3a2a1e"/></svg></span>
    <span class="tk act"><svg width="26" height="26"><use href="#chromeL"/></svg><svg class="tk-over" width="16" height="19" viewBox="0 0 16 19"><ellipse cx="8" cy="9.500" rx="8" ry="9.500" fill="#0c0c0c"/></svg></span>
    <span class="tk dotd"><svg width="24" height="24" viewBox="0 0 24 24"><rect width="24" height="24" rx="6" fill="#fff" stroke="#0b63e0"/><text x="12" y="15" text-anchor="middle" font-size="8.500" font-weight="700" font-family="Liberation Sans" fill="#0b63e0">Zalo</text></svg></span>
    <span class="tk dotd"><svg width="24" height="24" viewBox="0 0 24 24"><rect width="24" height="24" rx="3" fill="#20405f"/><path d="M4 4q8-2 11 3 3 5 4 13M6 8q4 0 6 4M14 6q1 2 0 4" fill="none" stroke="#c7dcea"/></svg></span>
    <span class="tk dotd"><svg width="23" height="26" viewBox="0 0 23 26"><rect y="2" width="23" height="22" fill="#35a2bc"/><rect y="23" width="23" height="3" fill="#a87b4a"/><path d="M3 0v4M7 0v4M11 0v4M15 0v4M19 0v4" stroke="#2c6f88" stroke-width="1.600"/><path d="M5 9h13M5 13h13M5 17h13" stroke="#fff" stroke-width="2"/></svg></span>
    <span class="tk dotd"><svg width="24" height="24" viewBox="0 0 24 24"><path d="M17.500 1L7 10.500 3 7.200 1 8.300v7.400l2 1.100 4-3.300L17.500 23l5.500-2V3z" fill="#1a86d8"/><path d="M17.500 7l-7 5 7 5z" fill="#fff"/></svg></span>
    <span class="tk"><svg width="24" height="20" viewBox="0 0 24 20"><rect width="24" height="20" rx="2" fill="url(#gTerm)"/><rect width="24" height="4" fill="#8a8a8a"/><path d="M4 8l4 3-4 3" fill="none" stroke="#fff" stroke-width="1.500"/><path d="M10 15h6" stroke="#fff" stroke-width="1.500"/></svg></span>

    <div class="tray">
      <svg class="t-caret" width="12" height="7" viewBox="0 0 12 7"><path d="M1 6l5-5 5 5" fill="none" stroke="#222" stroke-width="1.500"/></svg>
      <svg class="t-smile" width="16" height="16" viewBox="0 0 16 16"><circle cx="8" cy="8" r="7.300" fill="none" stroke="#222"/><circle cx="5.500" cy="6.500" r="1" fill="#222"/><circle cx="10.500" cy="6.500" r="1" fill="#222"/><path d="M4.500 10q3.500 3 7 0" fill="none" stroke="#222"/></svg>
      <svg class="t-wifi" width="16" height="13" viewBox="0 0 16 13"><path d="M.5 4.500q7.500-6 15 0M3 7.300q5-4 10 0M5.500 10q2.500-2 5 0" fill="none" stroke="#222" stroke-width="1.200"/><circle cx="8" cy="12" r="1.100" fill="#222"/></svg>
      <svg class="t-spk" width="16" height="12" viewBox="0 0 16 12"><path d="M1 4h2.500L7 1v10L3.500 8H1z" fill="none" stroke="#222"/><path d="M10 4l5 5m0-5l-5 5" stroke="#222"/></svg>
      <svg class="t-bat" width="17" height="15" viewBox="0 0 17 15"><rect x="1" y="4" width="14" height="8" rx="1" fill="#222"/><path d="M4 2L3 7l3-3 3 3 1-3" fill="none" stroke="#222"/><path d="M11 10q2-2 3 0 1-2 3 0l-3 4z" fill="#222"/></svg>
      <div class="clock"><span>5:19 PM</span><span>4/3/2025</span></div>
    </div>
  </footer>
</div>
</body>
</html>
```

FILE: styles.css
```css
* { box-sizing: border-box; }
html, body { margin: 0; padding: 0; width: 1919px; height: 1079px; overflow: hidden; }
body { font-family: "Noto Sans", "Liberation Sans", sans-serif; font-size: 11px; color: #222; }
svg { display: block; flex: none; }
.defs { height: 0; width: 0; overflow: hidden; }
i { display: block; font-style: normal; flex: none; }

.desktop { display: flex; flex-direction: column; width: 1919px; height: 1079px; }
.windows { display: flex; height: 1032px; flex: none; }

/* ---------- Workbench window ---------- */
.wb { position: relative; width: 968px; height: 1032px; display: flex; flex-direction: column; flex: none; background: #f3f3f5; border-top: 1px solid #777; border-left: 1px solid #777; border-right: 3px solid #707070; border-bottom: 1px solid #777; }
.wb::after { content: ""; position: absolute; top: 0; right: 0; bottom: 0; width: 22px; background: linear-gradient(90deg, rgba(120,120,120,0), rgba(120,120,120,.26)); pointer-events: none; }
.wb-title { height: 32px; flex: none; background: #fff; display: flex; align-items: center; padding: 0 0 3px 8px; }
.wb-name { margin-left: 5px; font-size: 11.500px; color: #999; letter-spacing: -.1px; }
.wb-ctl { margin-left: auto; margin-right: 18px; display: flex; gap: 35px; }
.wb-tabs { height: 23px; flex: none; background: #fff; display: flex; align-items: flex-end; }
.home-tab { width: 41px; height: 23px; background: #f3f3f5; display: flex; align-items: center; justify-content: center; margin-left: 1px; clip-path: polygon(0 0, 84% 0, 100% 100%, 0 100%); }
.conn-tab { width: 212px; height: 23px; background: #f3f3f5; clip-path: polygon(0 0, 88% 0, 100% 100%, 0 100%); display: flex; align-items: center; padding: 0 0 2px 13px; font-size: 11px; color: #333; }
.conn-tab svg { margin-left: 5px; margin-top: 2px; }
.wb-menu { height: 24px; flex: none; display: flex; align-items: center; padding-bottom: 2px; font-size: 11px; color: #222; }
.m-file { margin-left: 9px; width: 35px; } .m-edit { width: 37px; } .m-view { width: 41px; } .m-query { width: 48px; } .m-db { width: 64px; } .m-server { width: 51px; } .m-tools { width: 44px; } .m-script { width: 61px; }
.wb-tools { height: 29px; flex: none; display: flex; align-items: center; padding-left: 4px; }
.dots { width: 1px; height: 17px; margin: 0 2px 0 3px; background: repeating-linear-gradient(180deg, #8a98a8 0 1px, transparent 1px 2px); }
.wb-tools > .dots:first-child { margin-left: 0; }
.tool { position: relative; width: 28px; height: 22px; display: flex; align-items: center; justify-content: center; }
.tool.first { margin-left: 3px; }
.badge { position: absolute; left: 3px; bottom: 0; }
.wb-tools-right { margin-left: auto; margin-right: 3px; display: flex; align-items: center; gap: 2px; }
.wb-tools-right .dots.slim { margin: 0 2px 0 5px; }
.wb-work { flex: 1; display: flex; min-height: 0; padding: 5px 6px 7px 6px; }

/* sidebar */
.nav-side { width: 25px; flex: none; margin-right: 6px; display: flex; flex-direction: column; overflow: hidden; }
.nav-head { height: 22px; flex: none; background: #e4e4e4; color: #666; font-size: 10px; line-height: 12px; padding: 0 0 0 7px; overflow: hidden; }
.nav-body { background: #fff; height: 543px; flex: none; display: flex; flex-direction: column; }
.nav-body.info { height: 250px; }
.nav-row { display: flex; align-items: center; height: 20px; padding-left: 3px; margin-top: 0; font-size: 11px; overflow: hidden; }
.nav-row b { font-weight: 400; margin-left: -4px; color: #111; }
.nav-find { padding: 7px 0 0 6px; height: 22px; }
.nav-tree { display: flex; align-items: center; gap: 4px; height: 22px; padding-left: 7px; }
.nav-filter { height: 15px; margin: 12px 0 0 1px; border: 1px solid #ddd; border-right: 0; background: #fafafa; }
.nav-arrows { margin: 199px 0 0 7px; display: flex; flex-direction: column; gap: 8px; }
.side-btn { height: 15px; width: 23px; flex: none; margin-top: 16px; background: #e9edf2; border: 1px solid #a8a8a8; display: flex; align-items: center; justify-content: center; }
.side-btn.low { margin-top: 18px; height: 17px; }
.nav-info { height: 29px; flex: none; padding: 9px 0 0 6px; font-size: 10px; line-height: 11px; color: #666; }

/* center */
.wb-center { flex: 1; min-width: 0; display: flex; flex-direction: column; gap: 6px; position: relative; }
.wb-upper { display: flex; gap: 4px; height: 705px; flex: none; }
.q-col { width: 689px; flex: none; display: flex; flex-direction: column; }
.q-tabs { height: 22px; flex: none; background: #e4e4e4; border-bottom: 2px solid #0a74cc; display: flex; align-items: center; font-size: 11px; color: #333; }
.qt { width: 73px; flex: none; padding-bottom: 4px; }
.qt.cut { width: 67px; }
.qt.srch { width: 66px; }
.qt.active { height: 20px; background: #0a74cc; color: #fff; padding: 0 8px 3px 7px; display: flex; align-items: center; justify-content: space-between; }
.q-nav { margin-left: 6px; }
.q-bar { height: 26px; flex: none; background: linear-gradient(180deg, #fdfdfd, #efeff1); display: flex; align-items: center; padding-left: 7.500px; }
.ti { width: 27px; height: 22px; flex: none; display: flex; align-items: center; justify-content: center; }
.sep { width: 1px; height: 15px; background: #b5b5b5; margin: 0 1px 0 3px; }
.sep.wide { margin-right: 3px; }
.ti-on { width: 23px; height: 23px; margin-left: 3px; border: 1px solid #0a74cc; display: flex; align-items: center; justify-content: center; background: #f2f2f2; flex: none; }
.sep.after-on { margin-left: 5px; margin-right: 4px; }
.limit { width: 121px; height: 21px; background: #fff; display: flex; align-items: center; justify-content: space-between; padding: 0 3px 2px 5px; font-size: 11px; color: #111; flex: none; }
.sep.after-limit { margin-left: 6px; }
.editor { height: 160px; flex: none; background: #fff; display: flex; align-items: flex-start; padding-top: 4px; }
.ln { font-family: "DejaVu Sans Mono", monospace; font-size: 11px; color: #3b8ad0; margin-left: 25px; line-height: 14px; width: 17px; }
.dot { width: 5px; height: 5px; border-radius: 50%; background: #0a74cc; margin: 4px 0 0 1px; }
.sql { font-family: "DejaVu Sans Mono", monospace; font-size: 11.620px; line-height: 14px; margin-left: 22px; color: #222; }
.kw { color: #0a74cc; }
.split { height: 19px; flex: none; background: #f0f0f2; padding: 4px 0 0 17px; }
.split i { width: 202px; height: 2px; background: #8a8f95; }
.results { flex: 1; display: flex; min-height: 0; }
.res-main { flex: 1; min-width: 0; background: #fff; padding-left: 1px; }
.res-bar { height: 23px; display: flex; align-items: center; background: #f6f6f7; font-size: 10px; color: #333; white-space: nowrap; overflow: hidden; }
.rsep { width: 1px; height: 17px; background: #bbb; }
.rsep.first { margin: 0 7px 0 2px; }
.rsep.second { margin: 0 6px 0 6px; }
.rsep.edit { margin: 0 4px; }
.rsep.exp { margin: 0 3px 0 0; }
.rsep.wr { margin: 0 3px 0 1px; }
.rg { font-weight: 700; width: 55px; color: #333; }
.ri2 { margin-left: 15px; }
.fr { margin-left: 8px; width: 60px; }
.fbox { width: 99px; height: 21px; background: #fff; border-bottom: 1px solid #999; flex: none; }
.lb.ed { width: 29px; }
.lb.ex { width: 79px; }
.ri3 { margin-right: 8px; }
.grid { border-collapse: separate; border-spacing: 0; table-layout: fixed; width: 605px; border-left: 1px solid #8a8a8a; margin-left: 1px; font-size: 10px; color: #222; }
.grid th { height: 21px; padding: 0 0 0 6px; text-align: left; font-weight: 400; background: #fff; border-right: 1px solid #e6e6e6; border-bottom: 1px solid #a0a0a0; border-top: 1px solid #bbb; }
.grid th:nth-child(1) { width: 226px; padding-left: 7px; }
.grid th:nth-child(2) { width: 130px; }
.grid th:nth-child(3) { width: 62px; }
.grid th:nth-child(4) { width: 43px; }
.grid th:nth-child(5) { width: 143px; }
.grid td { height: 17px; padding: 0 0 0 3px; white-space: nowrap; overflow: hidden; border-right: 1px solid #fff; line-height: 14px; }
.grid td:first-child { padding-left: 4px; font-size: 10.600px; letter-spacing: 0; }
.grid td:nth-child(2) { padding-left: 2px; }
.grid td:nth-child(5) { font-size: 10.950px; }
.grid tbody tr:nth-child(even) td { background: #eaf1fb; }
.grid .null td { height: 16px; vertical-align: top; padding: 0; }
mark { display: block; width: 22px; height: 8px; background: #777; color: #fff; font-size: 6px; line-height: 8px; text-align: center; font-weight: 700; }
.strip { width: 58px; flex: none; background: #e6e6e6; display: flex; flex-direction: column; color: #777; font-size: 10px; text-align: center; line-height: 11px; }
.st { display: flex; flex-direction: column; align-items: center; height: 69px; padding-top: 5px; }
.st span { margin-top: 5px; display: block; }
.st.on { position: relative; height: 67px; padding-top: 4px; background: #0a74cc; color: #fff; }
.st.on span { margin-top: -3px; }
.st.on::before { content: ""; position: absolute; left: 0; top: 27px; border-left: 9px solid #fff; border-top: 10px solid transparent; border-bottom: 10px solid transparent; }
.st.plan svg { margin-top: 1px; }
.st.plan span { margin-top: 8px; }
.res-tabs { height: 19px; flex: none; background: #e4e4e4; display: flex; align-items: center; font-size: 10px; }
.rt { width: 61px; height: 19px; background: #fff; color: #0a74cc; display: flex; align-items: center; padding: 0 0 1px 7px; gap: 10px; }
.rbtn { width: 62px; height: 15px; background: #f0f0f0; border-radius: 2px; color: #999; display: flex; align-items: center; justify-content: center; margin-left: 8px; }
.rbtn.apply { margin-left: 492px; color: #aaa; }

/* right panel */
.add-col { flex: 1; min-width: 0; display: flex; flex-direction: column; background: #fff; overflow: hidden; }
.add-head, .out-head { height: 22px; flex: none; background: #e4e4e4; display: flex; align-items: center; padding: 0 5px 0 7px; color: #777; font-size: 10.500px; gap: 5px; }
.add-head span { padding-bottom: 2px; }
.hatch { flex: 1; height: 7px; background: repeating-conic-gradient(#cfcfcf 0 25%, transparent 0 50%) 0 0 / 2px 2px; }
.add-bar { height: 26px; flex: none; background: #f3f3f5; display: flex; align-items: center; padding-left: 3px; }
.jump { margin-left: 6px; flex: 1; height: 21px; background: #fff; padding: 0 0 2px 3px; display: flex; align-items: center; font-size: 11px; color: #111; }
.add-body { flex: 1; min-height: 0; overflow: hidden; }
.add-body p { margin: 0; width: 250px; padding: 11.500px 0 0; text-align: center; white-space: nowrap; font-family: "DejaVu Sans", sans-serif; font-weight: 700; font-size: 14.500px; line-height: 19.500px; color: #808080; }
.add-tabs { height: 19px; flex: none; background: #e4e4e4; display: flex; align-items: center; font-size: 10.500px; }
.at { padding: 0 0 1px 8px; color: #333; }
.at.on { width: 81px; height: 19px; background: #fff; color: #0a74cc; display: flex; align-items: center; padding: 0 0 1px 7px; }

/* output */
.out { height: 200px; flex: none; display: flex; flex-direction: column; }
.out-head { height: 21px; }
.out-bar { height: 27px; flex: none; display: flex; align-items: center; padding-left: 8px; }
.combo { width: 150px; height: 21px; margin-left: 6px; background: #fff; display: flex; align-items: center; justify-content: space-between; padding: 0 3px 0 5px; font-size: 10px; flex: none; }
.out-wrap { flex: 1; display: flex; min-height: 0; background: #fff; }
.log { width: 905px; table-layout: fixed; border-collapse: separate; border-spacing: 0; font-size: 10.500px; flex: none; color: #222; }
.log th { height: 19px; font-weight: 400; text-align: left; padding: 0 0 1px 6px; font-size: 10px; border-right: 1px solid #e0e0e0; white-space: nowrap; }
.log th:nth-child(1) { width: 22px; padding: 0; }
.log th:nth-child(2) { width: 36px; }
.log th:nth-child(3) { width: 50px; }
.log th:nth-child(4) { width: 341px; }
.log th:nth-child(5) { width: 341px; }
.log td { height: 22px; padding: 0 0 5px 4px; white-space: pre; overflow: hidden; border-right: 1px solid #fff; }
.log td:first-child { padding: 0 0 2px 4px; }
.log td svg { width: 12px; height: 12px; }
.log td.r { text-align: right; padding: 0 5px 5px 0; }
.log td.c { text-align: center; padding: 0 0 5px; }
.log td:nth-child(4) { font-size: 10.750px; }
.log td:nth-child(5) { font-size: 11px; }
.log tbody tr:nth-child(odd) td { background: #eaf1fb; }
.log tbody tr td:first-child { border-left: 1px solid #fff; }
.out-scroll { flex: 1; background: #f3f3f5; padding: 97px 0 0 7px; }
.out-scroll i { width: 2px; height: 19px; background: #888; }

/* ---------- Chrome window ---------- */
.chrome { width: 951px; height: 1032px; flex: none; display: flex; flex-direction: column; border-top: 1px solid #777; border-bottom: 1px solid #777; }
.ch-top { height: 39px; flex: none; background: #f4dde0; display: flex; align-items: flex-end; position: relative; }
.ch-drop { width: 28px; height: 28px; border-radius: 8px; background: #fbeaeb; margin: 0 0 6px 5px; display: flex; align-items: center; justify-content: center; }
.ch-tab { width: 232px; height: 34px; background: #fff5f3; border-radius: 9px 9px 0 0; margin-left: 6px; display: flex; align-items: center; padding: 0 0 5px 8px; font-size: 11.500px; color: #333; }
.ch-tab span { margin-left: 8px; }
.ch-x { margin-left: auto; margin-right: 12px; }
.ch-plus { margin: 0 0 13px 14px; align-self: flex-end; }
.ch-ctl { margin-left: auto; display: flex; gap: 37px; align-self: center; margin-right: 17px; }
.ch-bar { height: 47px; flex: none; background: #fff5f3; border-radius: 8px 8px 0 0; border-bottom: 1px solid #eee0e0; display: flex; align-items: center; padding-left: 14px; }
.cb { margin-right: 23px; }
.cb:nth-child(3) { margin-right: 19px; }
.omni { width: 692px; height: 34px; border-radius: 17px; background: #e1dbde; display: flex; align-items: center; padding-left: 4px; flex: none; }
.omni-i { width: 24px; height: 24px; border-radius: 50%; background: #fff5f3; display: flex; align-items: center; justify-content: center; }
.url { margin-left: 8px; font-size: 13.500px; color: #333; white-space: nowrap; letter-spacing: -.2px; width: 528px; }
.oi { margin-right: 16px; }
.ext { margin-left: 19px; }
.ch-sep { width: 1px; height: 22px; background: #f0d4d8; margin-left: 19px; }
.avatar { width: 22px; height: 22px; border-radius: 50%; background: #0b0b0b; margin-left: 14px; flex: none; }
.kebab { margin-left: 23px; }
.page { flex: 1; background: #f3f4f6; position: relative; display: flex; align-items: center; justify-content: center; padding-right: 2px; }
.card { width: 492px; height: 296px; background: #fff; border-radius: 9px; box-shadow: 0 4px 7px -1px rgba(0,0,0,.1), 0 2px 4px -2px rgba(0,0,0,.1); padding: 26px 26px 0; font-family: "Liberation Sans", Arial, sans-serif; display: flex; flex-direction: column; }
.card h1 { margin: 0; font-size: 26.400px; line-height: 35px; font-weight: 700; text-align: center; color: #171717; }
.lbl { margin-top: 28px; font-size: 17.600px; line-height: 24px; color: #4a5565; }
.field { margin-top: 5px; height: 46px; border: 1px solid #d1d5dc; border-radius: 4px; display: flex; align-items: center; padding-left: 9px; font-size: 17.600px; color: #171717; }
.go { margin: 17px -1px 0; height: 46px; background: #00c951; border: 2px solid #111; border-radius: 5px; color: #fff; display: flex; align-items: center; justify-content: center; font-size: 17.600px; }
.miss { margin: 18px 0 0; text-align: center; font-size: 17.600px; line-height: 24px; color: #fb2c36; }
.next-badge { position: absolute; left: 19px; bottom: 20px; width: 44px; height: 44px; border-radius: 50%; background: #0c0c0c; border: 1px solid #444; box-shadow: 0 2px 6px rgba(0,0,0,.35); color: #eee; font: 700 16px "Liberation Sans", sans-serif; display: flex; align-items: center; justify-content: center; }

/* ---------- Taskbar ---------- */
.taskbar { height: 47px; flex: none; display: flex; align-items: center; padding-left: 540px; background: linear-gradient(90deg, #cfe3ef 0, #cbdfe9 30%, #c0e8e6 60%, #c4e9d2 100%); }
.tk { position: relative; width: 44px; height: 38px; flex: none; display: flex; align-items: center; justify-content: center; }
.tk.dotd::after { content: ""; position: absolute; left: 20px; bottom: 0; width: 4px; height: 3px; border-radius: 2px; background: #777; }
.tk.tv { margin-left: 3px; }
.tk.act { background: rgba(255,255,255,.5); border-radius: 4px; width: 38px; margin: 0 3px; }
.tk.act::after { content: ""; position: absolute; left: 10px; bottom: 0; width: 17px; height: 3px; border-radius: 2px; background: #0a74cc; }
.tk-over { position: absolute; right: 5px; top: 2px; }
.tk.act .tk-over { right: 3px; top: 0; }
.search { width: 218px; height: 30px; margin-left: 4px; flex: none; border-radius: 15px; background: #f3f7f9; border: 1px solid #c5d7de; display: flex; align-items: center; padding-left: 10px; font: 12px "Noto Sans", sans-serif; color: #555; }
.search span { margin-left: 10px; }
.art { margin-left: auto; margin-right: 5px; }
.tray { margin-left: auto; display: flex; align-items: center; padding-right: 19px; }
.t-smile { margin-left: 18px; }
.t-wifi { margin-left: 16px; }
.t-spk { margin-left: 8px; }
.t-bat { margin-left: 8px; }
.clock { display: flex; flex-direction: column; align-items: flex-end; width: 50px; margin-left: 13px; font-size: 11.700px; line-height: 16px; color: #222; }
```
